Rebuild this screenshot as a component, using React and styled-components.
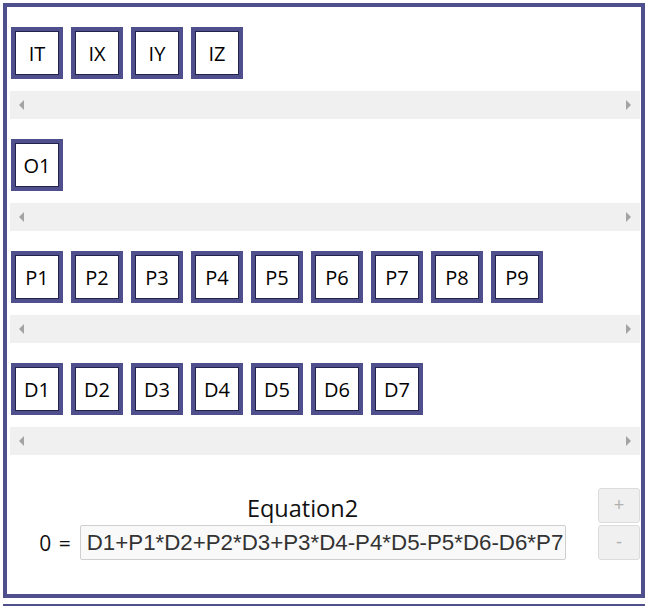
import React from "react";
import styled, { createGlobalStyle } from "styled-components";

const Global = createGlobalStyle`
  html, body { margin: 0; padding: 0; overflow: hidden; background: #fff; }
  body { font-family: "Open Sans", "Liberation Sans", sans-serif; }
  * { box-sizing: border-box; }
`;

const Page = styled.div`
  display: flex;
  flex-direction: column;
  gap: 6px;
  padding: 3px;
  height: 100vh;
  overflow: hidden;
`;

const Panel = styled.div`
  border: 4px solid #4f4f8d;
  display: flex;
  flex-direction: column;
  flex-shrink: 0;
  min-height: ${(p) => p.$minH || 0}px;
`;

const Section = styled.div`
  display: flex;
  flex-direction: column;
  gap: 12px;
  padding: 20px 1px 0 3px;
`;

const BoxRow = styled.div`
  display: flex;
  gap: 8px;
  padding-left: 1px;
`;

const VarBox = styled.div`
  width: 52px;
  height: 52px;
  border: 4px solid #4f4f8d;
  box-shadow: inset 0 0 0 1px #23234a;
  background: #fff;
  display: flex;
  align-items: center;
  justify-content: center;
  font-family: "Open Sans", sans-serif;
  font-size: 20px;
  color: #000;
`;

const ScrollBar = styled.div`
  height: 28px;
  background: #f0f0f0;
  display: flex;
  align-items: center;
  justify-content: space-between;
  padding: 0 9px;
`;

const Arrow = styled.div`
  width: 0;
  height: 0;
  border-top: 5px solid transparent;
  border-bottom: 5px solid transparent;
  ${(p) =>
    p.$dir === "left"
      ? "border-right: 5px solid #a3a3a3;"
      : "border-left: 5px solid #a3a3a3;"}
`;

const EqBlock = styled.div`
  display: flex;
  align-items: flex-end;
  padding: 33px 1px 34px 0;
`;

const EqMain = styled.div`
  flex: 1;
  display: flex;
  flex-direction: column;
  align-items: center;
`;

const EqTitle = styled.div`
  font-family: "Open Sans", sans-serif;
  font-size: 23.5px;
  color: #111;
  line-height: 30px;
  margin-bottom: 2px;
`;

const EqRow = styled.div`
  display: flex;
  align-items: center;
`;

const EqLabel = styled.span`
  font-family: "Open Sans", sans-serif;
  font-size: 21px;
  color: #111;
  margin-right: 9px;
  word-spacing: 2px;
`;

const EqInput = styled.div`
  width: 486px;
  height: 35px;
  border: 1px solid #cfcfcf;
  border-radius: 2px;
  background: #f9f9f9;
  display: flex;
  align-items: center;
  padding-left: 6px;
  font-family: "Liberation Sans", Arial, sans-serif;
  font-size: 22.3px;
  color: #333;
  white-space: nowrap;
  overflow: hidden;
`;

const BtnCol = styled.div`
  display: flex;
  flex-direction: column;
  gap: 2px;
`;

const SmallBtn = styled.div`
  width: 42px;
  height: 35px;
  border: 1px solid #dcdcdc;
  border-radius: 3px;
  background: #f0f0f0;
  color: #b0b0b0;
  font-family: "Liberation Sans", Arial, sans-serif;
  font-size: 18px;
  display: flex;
  align-items: center;
  justify-content: center;
`;

const groups = [
  ["IT", "IX", "IY", "IZ"],
  ["O1"],
  ["P1", "P2", "P3", "P4", "P5", "P6", "P7", "P8", "P9"],
  ["D1", "D2", "D3", "D4", "D5", "D6", "D7"],
];

export default function App() {
  return (
    <>
      <Global />
      <Page>
        <Panel>
          {groups.map((g, i) => (
            <Section key={i}>
              <BoxRow>
                {g.map((v) => (
                  <VarBox key={v}>{v}</VarBox>
                ))}
              </BoxRow>
              <ScrollBar>
                <Arrow $dir="left" />
                <Arrow $dir="right" />
              </ScrollBar>
            </Section>
          ))}
          <EqBlock>
            <EqMain>
              <EqTitle>Equation2</EqTitle>
              <EqRow>
                <EqLabel>0 =</EqLabel>
                <EqInput>D1+P1*D2+P2*D3+P3*D4-P4*D5-P5*D6-D6*P7</EqInput>
              </EqRow>
            </EqMain>
            <BtnCol>
              <SmallBtn>+</SmallBtn>
              <SmallBtn>-</SmallBtn>
            </BtnCol>
          </EqBlock>
        </Panel>
        <Panel $minH={200} />
      </Page>
    </>
  );
}
